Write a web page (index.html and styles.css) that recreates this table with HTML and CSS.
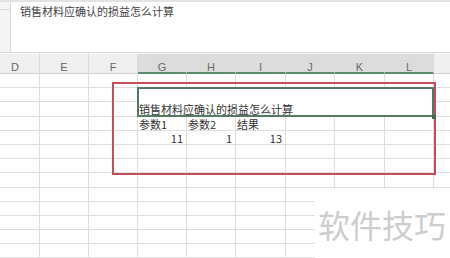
FILE: index.html
```html
<!DOCTYPE html>
<html>
<head>
<meta charset="utf-8">
<link rel="stylesheet" href="styles.css">
</head>
<body>
<div class="formula">
  <div class="namebox"><div class="namebox-top"></div></div>
  <div class="formula-text">销售材料应确认的损益怎么计算</div>
</div>
<div class="sheet-wrap">
  <div class="sheet">
    <div class="hd">D</div><div class="hd">E</div><div class="hd">F</div>
    <div class="hd sel">G</div><div class="hd sel">H</div><div class="hd sel">I</div>
    <div class="hd sel">J</div><div class="hd sel">K</div><div class="hd sel last">L</div>
    <div class="hd"></div>

    <div class="c"></div><div class="c"></div><div class="c"></div><div class="c"></div><div class="c"></div><div class="c"></div><div class="c"></div><div class="c"></div><div class="c"></div><div class="c"></div>

    <div class="c"></div><div class="c"></div><div class="c"></div>
    <div class="c merged"><span class="title">销售材料应确认的损益怎么计算</span><span class="handle"></span></div>
    <div class="c"></div>
    <div class="c"></div><div class="c"></div><div class="c"></div>
    <div class="c"></div>

    <div class="c"></div><div class="c"></div><div class="c"></div>
    <div class="c">参数1</div><div class="c">参数2</div><div class="c">结果</div>
    <div class="c"></div><div class="c"></div><div class="c"></div><div class="c"></div>

    <div class="c"></div><div class="c"></div><div class="c"></div>
    <div class="c num">11</div><div class="c num">1</div><div class="c num">13</div>
    <div class="c"></div><div class="c"></div><div class="c"></div><div class="c"></div>

    <div class="c"></div><div class="c"></div><div class="c"></div><div class="c"></div><div class="c"></div><div class="c"></div><div class="c"></div><div class="c"></div><div class="c"></div><div class="c"></div>
    <div class="c"></div><div class="c"></div><div class="c"></div><div class="c"></div><div class="c"></div><div class="c"></div><div class="c"></div><div class="c"></div><div class="c"></div><div class="c"></div>
    <div class="c"></div><div class="c"></div><div class="c"></div><div class="c"></div><div class="c"></div><div class="c"></div><div class="c"></div><div class="c"></div><div class="c"></div><div class="c"></div>
    <div class="c"></div><div class="c"></div><div class="c"></div><div class="c"></div><div class="c"></div><div class="c"></div><div class="c"></div><div class="c"></div><div class="c"></div><div class="c"></div>
    <div class="c"></div><div class="c"></div><div class="c"></div><div class="c"></div><div class="c"></div><div class="c"></div><div class="c"></div><div class="c"></div><div class="c"></div><div class="c"></div>
    <div class="c"></div><div class="c"></div><div class="c"></div><div class="c"></div><div class="c"></div><div class="c"></div><div class="c"></div><div class="c"></div><div class="c"></div><div class="c"></div>
    <div class="c"></div><div class="c"></div><div class="c"></div><div class="c"></div><div class="c"></div><div class="c"></div><div class="c"></div><div class="c"></div><div class="c"></div><div class="c"></div>
    <div class="c"></div><div class="c"></div><div class="c"></div><div class="c"></div><div class="c"></div><div class="c"></div><div class="c"></div><div class="c"></div><div class="c"></div><div class="c"></div>
  </div>
  <div class="red-box"></div>
  <div class="watermark">软件技巧</div>
</div>
</body>
</html>
```

FILE: styles.css
```css
* { box-sizing: border-box; }
html, body { margin: 0; padding: 0; }
body {
  width: 450px;
  height: 258px;
  overflow: hidden;
  background: #fff;
  font-family: "Noto Sans CJK SC", "Noto Sans", sans-serif;
  color: #333;
}
.formula {
  display: flex;
  height: 53px;
  border-top: 2px solid #e2e2e2;
  border-bottom: 1px solid #d6d6d6;
}
.namebox {
  width: 11px;
  background: #f4f4f4;
  border-right: 1px solid #d9d9d9;
}
.namebox-top {
  height: 8px;
  border-bottom: 1px solid #dcdcdc;
}
.formula-text {
  padding: 2px 0 0 9px;
  font-size: 11px;
  line-height: 14px;
  color: #444;
}
.sheet-wrap {
  position: relative;
  height: 205px;
  overflow: hidden;
}
.sheet {
  display: grid;
  grid-template-columns: 49px 49px 49px 49px 49px 50px 49px 50px 49px 49px;
  grid-template-rows: 21px repeat(13, 14.2px);
  margin-left: -9px;
  width: 492px;
}
.hd {
  background: #efefef;
  border-top: 1px solid #fafafa;
  border-right: 1px solid #dadada;
  border-bottom: 1px solid #d2d2d2;
  font-family: "Liberation Sans", "Noto Sans", sans-serif;
  font-size: 11px;
  color: #666;
  text-align: center;
  line-height: 12px;
  padding-top: 7px;
}
.hd.sel {
  background: #dcdcdc;
  border-bottom: 2px solid #5a8c6c;
  color: #6a6a6a;
}
.c {
  border-right: 1px solid #dfdfdf;
  border-bottom: 1px solid #dfdfdf;
  font-size: 11px;
  line-height: 12px;
  display: flex;
  align-items: flex-end;
  padding-left: 1px;
  white-space: nowrap;
  color: #333;
}
.c.num {
  justify-content: flex-end;
  padding-right: 3px;
}
.merged {
  grid-column: 4 / span 6;
  grid-row: 3 / span 2;
  position: relative;
  border-right: none;
  border-bottom: none;
  padding-bottom: 2px;
}
.merged::after {
  content: "";
  position: absolute;
  left: -1px;
  top: -1px;
  right: 0;
  bottom: 0;
  border: 2px solid #527a63;
}
.handle {
  position: absolute;
  right: -2px;
  bottom: -2px;
  width: 4px;
  height: 4px;
  background: #3f6a51;
  z-index: 2;
}
.red-box {
  position: absolute;
  left: 112px;
  top: 29px;
  width: 324px;
  height: 93px;
  border: 2px solid #c44f5a;
}
.watermark {
  position: absolute;
  left: 315px;
  top: 136px;
  right: 0;
  bottom: 0;
  background: #fff;
  padding: 19px 0 0 3px;
  font-family: "Noto Sans CJK SC", sans-serif;
  font-size: 32px;
  line-height: 32px;
  color: #cdcdcd;
  white-space: nowrap;
}
```
